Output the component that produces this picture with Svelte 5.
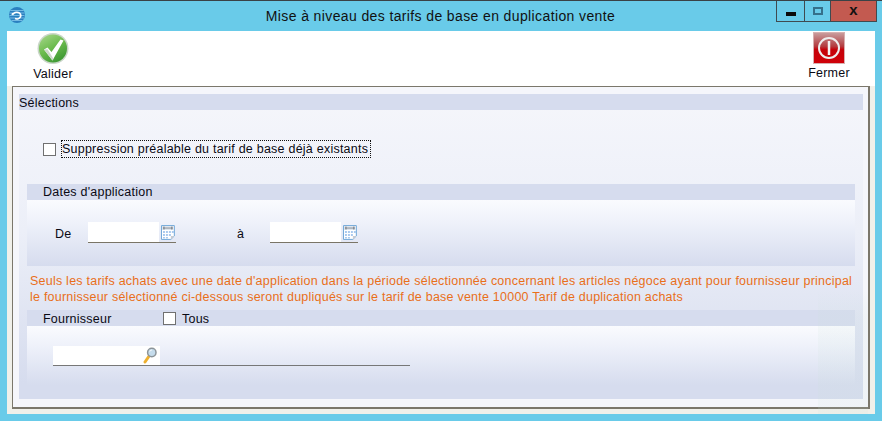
<script>
  const lines = [
    "Seuls les tarifs achats avec une date d'application dans la période sélectionnée concernant les articles négoce ayant pour fournisseur principal",
    "le fournisseur sélectionné ci-dessous seront dupliqués sur le tarif de base vente 10000 Tarif de duplication achats"
  ];
</script>

{#snippet calendar()}
  <svg class="cal" width="16" height="17" viewBox="0 0 16 17">
    <path d="M1.5 1.5h13v10.5l-3.5 3.5h-9.5z" fill="#fff" stroke="#6ea6d8"/>
    <rect x="2" y="2" width="12" height="4" fill="#dfe6ee"/>
    <path d="M3 4h10" stroke="#8a8f96"/>
    <path d="M4 2.5v3M12 2.5v3" stroke="#70757c"/>
    <path d="M3 7h2v2H3zM6 7h2v2H6zM9 7h2v2H9zM12 7h2v2h-2zM3 10h2v2H3zM6 10h2v2H6zM9 10h2v2H9zM3 13h2v1.500H3zM6 13h2v1.500H6z" fill="#a9c9ee"/>
    <path d="M11 15.500v-3.500h3.500z" fill="#c9ccd2"/>
  </svg>
{/snippet}

<div class="window">
  <header class="titlebar">
    <svg class="appicon" width="18" height="18" viewBox="0 0 18 18">
      <circle cx="9" cy="9" r="8" fill="#2a7fbf"/>
      <path d="M2.500 4.500h13M1.500 7h15M1.500 9.500h15M2 12h14M3.500 14.500h11" stroke="#86c8ec" stroke-width="0.800"/>
      <path d="M5 8.500a4 3.300 0 1 1 2 4M5 8.500l-1.200-1" fill="none" stroke="#fff" stroke-width="1.700"/>
    </svg>
    <h1>Mise à niveau des tarifs de base en duplication vente</h1>
    <div class="controls">
      <div class="ctl min"><span></span></div>
      <div class="ctl max"><span></span></div>
      <div class="ctl close">x</div>
    </div>
  </header>

  <div class="client">
    <div class="toolbar">
      <div class="tool">
        <svg width="32" height="33" viewBox="0 0 32 33">
          <defs>
            <linearGradient id="gr" x1="0" y1="0" x2="0.6" y2="1">
              <stop offset="0" stop-color="#a9d98c"/>
              <stop offset="0.55" stop-color="#6cbb4e"/>
              <stop offset="1" stop-color="#3f9a34"/>
            </linearGradient>
          </defs>
          <circle cx="16" cy="16.500" r="15.500" fill="#c9d6c8"/>
          <circle cx="16" cy="16.500" r="14" fill="url(#gr)"/>
          <path d="M7 17.500l3.500-2 4 4.500 9-12.500 3 1-11 20z" fill="#fff"/>
          <path d="M7 17.500l8.500 11 1-1.800-6-9.500z" fill="#cfd8cc"/>
        </svg>
        <span>Valider</span>
      </div>
      <div class="tool fermer">
        <svg width="32" height="32" viewBox="0 0 32 32">
          <defs>
            <linearGradient id="rd" x1="0" y1="0" x2="0" y2="1">
              <stop offset="0" stop-color="#c8a0a0"/>
              <stop offset="0.45" stop-color="#b43a3e"/>
              <stop offset="0.55" stop-color="#c5020a"/>
              <stop offset="1" stop-color="#d00008"/>
            </linearGradient>
          </defs>
          <rect x="0.500" y="0.500" width="31" height="31" fill="url(#rd)" stroke="#d8b0b0"/>
          <circle cx="16" cy="16" r="10" fill="none" stroke="#eee" stroke-width="2"/>
          <path d="M16 9v14" stroke="#f2f2f2" stroke-width="2.500"/>
        </svg>
        <span>Fermer</span>
      </div>
    </div>

    <div class="frame">
      <section class="outer">
        <div class="head h1">Sélections</div>
        <div class="outer-body">
          <div class="check-row">
            <span class="box"></span>
            <span class="focus">Suppression préalable du tarif de base déjà existants</span>
          </div>

          <div class="group dates">
            <div class="head h2">Dates d'application</div>
            <div class="group-body date-row">
              <span class="lbl de">De</span>
              <div class="datefield"><div class="white"></div>{@render calendar()}</div>
              <span class="lbl a">à</span>
              <div class="datefield"><div class="white"></div>{@render calendar()}</div>
            </div>
          </div>

          <p class="note">{lines[0]}<br />{lines[1]}</p>

          <div class="group sup">
            <div class="head h2 suphead">
              <span class="suplabel">Fournisseur</span>
              <span class="box"></span>
              <span class="tous">Tous</span>
            </div>
            <div class="group-body sup-row">
              <div class="supfield">
                <div class="supinput">
                  <svg width="15" height="17" viewBox="0 0 15 17">
                    <path d="M7.500 8.500L3 15" stroke="#eeb030" stroke-width="3" stroke-linecap="round"/>
                    <circle cx="9.800" cy="5.500" r="4.200" fill="#c5dcec" stroke="#8c9499" stroke-width="1.500"/>
                    <path d="M7.800 4.500a2.500 2.500 0 0 1 2-1.500" stroke="#fff" fill="none"/>
                  </svg>
                </div>
              </div>
            </div>
          </div>
        </div>
      </section>
    </div>
  </div>
  <div class="tint"></div>
</div>

<style>
  :global(body) { margin: 0; }
  .window {
    position: relative;
    width: 882px;
    height: 421px;
    box-sizing: border-box;
    background: #69cbe9;
    border-top: 1px solid #3a4246;
    display: flex;
    flex-direction: column;
    overflow: hidden;
    font: 12.500px "Liberation Sans", Arial, sans-serif;
    letter-spacing: 0.23px;
    color: #0a0a14;
  }
  .titlebar {
    height: 30px;
    flex: none;
    display: flex;
    align-items: flex-start;
    position: relative;
    padding-left: 8px;
  }
  .appicon { margin-top: 5px; }
  h1 {
    position: absolute;
    left: 0;
    width: 881px;
    top: 7px;
    margin: 0;
    text-align: center;
    font: 400 14px/17px "Liberation Sans", Arial, sans-serif;
    letter-spacing: 0.38px;
    color: #111;
  }
  .controls {
    position: absolute;
    left: 776px;
    top: 0;
    display: flex;
    height: 21px;
    box-sizing: border-box;
    border: 1px solid #3f4a50;
    border-top: 0;
  }
  .ctl {
    display: flex;
    align-items: center;
    justify-content: center;
    height: 20px;
    box-sizing: border-box;
  }
  .min { width: 28px; border-right: 1px solid #3f4a50; }
  .min span { width: 10px; height: 4px; background: #0b0b0b; margin-top: 5px; }
  .max { width: 26px; border-right: 1px solid #3f4a50; }
  .max span { width: 6px; height: 4px; border: 2px solid #35708a; margin-top: -1px; }
  .close {
    width: 45px;
    background: #c35a50;
    color: #111;
    font: 700 15px/14px "Liberation Sans", Arial, sans-serif;
    padding-bottom: 3px;
  }
  .client {
    margin: 0 7px 7px;
    flex: 1;
    min-height: 0;
    background: #f0f0ea;
    display: flex;
    flex-direction: column;
  }
  .toolbar {
    height: 55px;
    flex: none;
    background: #fff;
    display: flex;
    justify-content: space-between;
    padding: 1px 25px 0 25px;
    box-sizing: border-box;
  }
  .tool {
    width: 42px;
    display: flex;
    flex-direction: column;
    align-items: center;
    line-height: 15px;
    white-space: nowrap;
  }
  .tool span { margin-top: 2px; }
  .frame {
    margin: 0 5px 5px;
    flex: 1;
    min-height: 0;
    border: 1px solid #7b776b;
    border-right-width: 2px;
    border-bottom-width: 2px;
    background: #f5f6fb;
    padding: 7px 5px 8px 6px;
    display: flex;
    box-sizing: border-box;
  }
  .outer {
    flex: 1;
    display: flex;
    flex-direction: column;
    min-width: 0;
    background: linear-gradient(#f5f6fb 0%, #eceff8 45%, #d6dcee 95%);
  }
  .head {
    background: #d6dcee;
    height: 16px;
    line-height: 18px;
    flex: none;
    white-space: nowrap;
  }
  .h1 { padding-left: 0; }
  .h2 { padding-left: 16px; line-height: 16px; }
  .outer-body {
    flex: 1;
    padding: 0 8px 14px;
    display: flex;
    flex-direction: column;
  }
  .check-row {
    display: flex;
    align-items: center;
    margin: 30px 0 0 16px;
    height: 18px;
  }
  .box {
    width: 13px;
    height: 13px;
    box-sizing: border-box;
    background: #fff;
    border: 1px solid #707070;
    flex: none;
    display: block;
  }
  .focus {
    margin-left: 5px;
    height: 18px;
    line-height: 18px;
    box-sizing: border-box;
    outline: 1px dotted #111;
    outline-offset: -1px;
    padding: 0 3px 0 1px;
    white-space: nowrap;
  }
  .group { display: flex; flex-direction: column; }
  .dates { margin-top: 26px; height: 82px; }
  .group-body {
    flex: 1;
    background: linear-gradient(#fafbfe 0%, #eef1fa 35%, #d6dcee 100%);
  }
  .date-row {
    display: flex;
    align-items: flex-start;
    padding: 22px 0 0 28px;
  }
  .lbl { line-height: 24px; }
  .de { width: 33px; }
  .a { width: 33px; margin-left: 61px; }
  .datefield {
    width: 88px;
    height: 21px;
    box-sizing: border-box;
    border-bottom: 1px solid #7a7566;
    display: flex;
  }
  .white { width: 72px; background: #fff; }
  .cal { margin-top: 2px; margin-left: 1px; }
  .note {
    margin: 7px 3px 0 3px;
    color: #e96f1a;
    line-height: 16px;
    white-space: nowrap;
    height: 37px;
  }
  .sup { flex: 1; }
  .suphead { display: flex; align-items: center; }
  .suplabel { width: 120px; padding-top: 1px; }
  .tous { margin-left: 6px; padding-top: 1px; }
  .sup-row { padding: 20px 0 0 26px; }
  .supfield {
    width: 357px;
    height: 20px;
    box-sizing: border-box;
    border-bottom: 1px solid #777;
  }
  .supinput {
    width: 107px;
    height: 19px;
    background: #fff;
    display: flex;
    justify-content: flex-end;
    padding-right: 3px;
    box-sizing: border-box;
  }
  .supinput svg { margin-top: 1px; flex: none; }
  .tint {
    position: absolute;
    left: 818px;
    top: 290px;
    width: 50px;
    height: 123px;
    background: linear-gradient(rgba(200, 225, 215, 0), rgba(200, 225, 215, 0.12) 20%);
    pointer-events: none;
  }
</style>
